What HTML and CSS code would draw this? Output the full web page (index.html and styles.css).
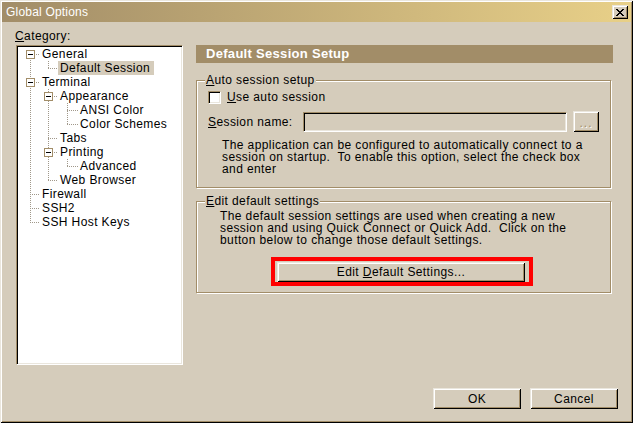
FILE: index.html
```html
<!DOCTYPE html>
<html>
<head>
<meta charset="utf-8">
<link rel="stylesheet" href="styles.css">
</head>
<body>
<div class="window">
  <div class="titlebar">
    <span class="title">Global Options</span>
    <span class="close"><svg width="8" height="7" viewBox="0 0 8 7"><path fill="#000" d="M0 0h2v1H0zM6 0h2v1H6zM1 1h2v1H1zM5 1h2v1H5zM2 2h4v1H2zM3 3h2v1H3zM2 4h4v1H2zM1 5h2v1H1zM5 5h2v1H5zM0 6h2v1H0zM6 6h2v1H6z"/></svg></span>
  </div>
  <div class="main">
    <div class="left">
      <div class="cat-label"><u>C</u>ategory:</div>
      <div class="tree">
        <svg class="tree-lines" width="160" height="200" viewBox="0 0 160 200" shape-rendering="crispEdges">
          <g stroke="#A0988A" stroke-width="1" stroke-dasharray="1 1" fill="none">
            <path d="M12.5 7V176"/>
            <path d="M12 7.5H22M12 35.5H22M12 147.5H22M12 161.5H22M12 175.5H22"/>
            <path d="M30.5 14V22M30.5 42V134"/>
            <path d="M30 21.5H40M30 49.5H40M30 91.5H40M30 105.5H40M30 133.5H40"/>
            <path d="M49.5 56V78M49.5 112V120"/>
            <path d="M49 63.5H60M49 77.5H60M49 119.5H60"/>
          </g>
          <g fill="#fff" stroke="#A28D68">
            <rect x="8.5" y="3.5" width="8" height="8"/>
            <rect x="8.5" y="31.5" width="8" height="8"/>
            <rect x="26.5" y="45.5" width="8" height="8"/>
            <rect x="26.5" y="101.5" width="8" height="8"/>
          </g>
          <g stroke="#000">
            <path d="M10 7.5H15M10 35.5H15M28 49.5H33M28 105.5H33"/>
          </g>
        </svg>
        <div class="row l0">General</div>
        <div class="row l1"><span class="sel">Default Session</span></div>
        <div class="row l0">Terminal</div>
        <div class="row l1">Appearance</div>
        <div class="row l2">ANSI Color</div>
        <div class="row l2">Color Schemes</div>
        <div class="row l1">Tabs</div>
        <div class="row l1">Printing</div>
        <div class="row l2">Advanced</div>
        <div class="row l1">Web Browser</div>
        <div class="row l0">Firewall</div>
        <div class="row l0">SSH2</div>
        <div class="row l0">SSH Host Keys</div>
      </div>
    </div>
    <div class="right">
      <div class="header">Default Session Setup</div>
      <fieldset class="group auto">
        <legend><u>A</u>uto session setup</legend>
        <div class="check-row"><span class="checkbox"></span><span><u>U</u>se auto session</span></div>
        <div class="name-row">
          <span class="name-label"><u>S</u>ession name:</span>
          <span class="input"></span>
          <span class="btn small disabled"><span>...</span></span>
        </div>
        <p class="desc desc-auto">The application can be configured to automatically connect to a<br>session on startup.&nbsp; To enable this option, select the check box<br>and enter</p>
      </fieldset>
      <fieldset class="group edit">
        <legend><u>E</u>dit default settings</legend>
        <p class="desc desc-edit">The default session settings are used when creating a new<br>session and using Quick Connect or Quick Add.&nbsp; Click on the<br>button below to change those default settings.</p>
        <div class="mark">
          <span class="btn wide"><span>Edit <u>D</u>efault Settings...</span></span>
        </div>
      </fieldset>
    </div>
  </div>
  <div class="footer">
    <span class="btn action"><span>OK</span></span>
    <span class="btn action"><span>Cancel</span></span>
  </div>
</div>
</body>
</html>
```
FILE: styles.css
```css
* { box-sizing: border-box; }
html, body { margin: 0; padding: 0; }
body {
  width: 633px;
  height: 423px;
  overflow: hidden;
  background: #D5CCBB;
  font-family: "Liberation Sans", Arial, sans-serif;
  font-size: 12px;
  letter-spacing: 0.4px;
  color: #000;
}
u { text-decoration: underline; text-underline-offset: 1px; }

.window {
  width: 633px;
  height: 423px;
  display: flex;
  flex-direction: column;
  background: #D5CCBB;
  box-shadow: inset 1px 1px #EAE6DD, inset -1px -1px #000, inset 2px 2px #fff, inset -2px -2px #A28D68;
}

.titlebar {
  margin: 2px 2px 0 2px;
  height: 20px;
  background: linear-gradient(to right, #A28D68, #E8D088);
  display: flex;
  align-items: center;
  padding: 0 3px 0 4px;
}
.title { color: #fff; line-height: 20px; letter-spacing: 0.2px; }
.close {
  margin-left: auto;
  width: 16px;
  height: 14px;
  background: #D5CCBB;
  box-shadow: inset 1px 1px #EAE6DD, inset -1px -1px #000, inset 2px 2px #fff, inset -2px -2px #A28D68;
  display: flex;
  align-items: center;
  justify-content: center;
}
.close svg { display: block; margin-left: -1px; }

.main { display: flex; padding: 7px 0 0 16px; }
.left { width: 167px; }
.cat-label { height: 14px; line-height: 14px; margin: 0 0 2px -1px; }

.tree {
  position: relative;
  height: 320px;
  background: #fff;
  border: 1px solid;
  border-color: #A28D68 #fff #fff #A28D68;
  box-shadow: inset 1px 1px #000, inset -1px -1px #EAE6DD;
  padding: 1px;
}
.tree-lines { position: absolute; top: 1px; left: 1px; }
.row { position: relative; height: 14px; line-height: 14px; white-space: nowrap; }
.l0 { padding-left: 24px; }
.l1 { padding-left: 42px; }
.l2 { padding-left: 62px; }
.sel { display: inline-block; background: #D5CCBB; margin-left: -2px; padding: 0 4px 0 2px; }

.right { margin-left: 13px; width: 417px; padding-top: 16px; }
.header {
  height: 18px;
  line-height: 18px;
  background: #A28D68;
  color: #fff;
  font-weight: bold;
  font-size: 13px;
  letter-spacing: 0.3px;
  padding-left: 10px;
}

.group {
  margin: 10px 0 0 0;
  width: 415px;
  min-width: 0;
  padding: 0;
  border: 1px solid #A28D68;
  box-shadow: inset 1px 1px #fff, 1px 1px #fff;
}
.group legend {
  margin-left: 8px;
  padding: 0 1px;
  line-height: 14px;
  background: #D5CCBB;
}
.group.auto { padding-bottom: 12px; }
.group.edit { margin-top: 6px; padding-bottom: 6px; }

.check-row { display: flex; align-items: center; height: 14px; margin-top: 3px; padding-left: 11px; }
.checkbox {
  width: 13px;
  height: 13px;
  background: #fff;
  border: 1px solid;
  border-color: #A28D68 #fff #fff #A28D68;
  box-shadow: inset 1px 1px #000, inset -1px -1px #EAE6DD;
  margin-right: 6px;
}
.name-row { display: flex; align-items: center; height: 21px; margin-top: 7px; padding-left: 11px; }
.name-label { width: 95px; }
.input {
  width: 264px;
  height: 20px;
  background: #D5CCBB;
  border: 1px solid;
  border-color: #A28D68 #fff #fff #A28D68;
  box-shadow: inset 1px 1px #000, inset -1px -1px #EAE6DD;
}

.desc { margin: 0; line-height: 12px; white-space: nowrap; }
.desc-auto { margin-top: 7px; padding-left: 25px; }
.desc-edit { margin-top: 2px; padding-left: 23px; }

.btn {
  display: flex;
  align-items: center;
  justify-content: center;
  background: #D5CCBB;
  box-shadow: inset 1px 1px #EAE6DD, inset -1px -1px #000, inset 2px 2px #fff, inset -2px -2px #A28D68;
  white-space: nowrap;
}
.btn.small { width: 26px; height: 21px; margin-left: 6px; }
.btn.disabled { color: #A28D68; text-shadow: 1px 1px #fff; letter-spacing: 1px; padding-top: 2px; }
.mark {
  margin: 11px 0 0 74px;
  width: 262px;
  height: 29px;
  border: 4px solid #f00;
  display: flex;
  align-items: center;
  padding-left: 2px;
}
.btn.wide { width: 248px; height: 20px; }

.footer {
  margin-top: auto;
  display: flex;
  justify-content: flex-end;
  gap: 9px;
  padding: 0 15px 14px 0;
}
.btn.action { width: 88px; height: 21px; }
```
